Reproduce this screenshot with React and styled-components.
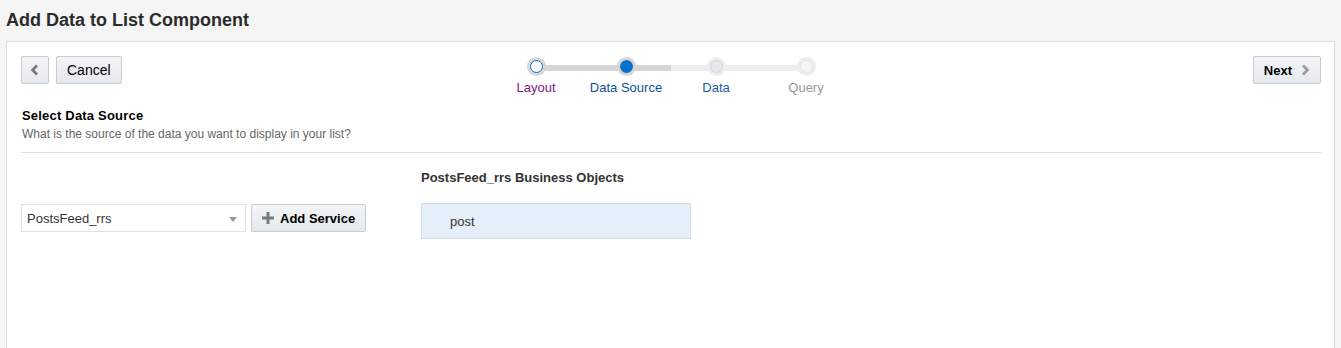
import React from "react";
import styled, { createGlobalStyle } from "styled-components";

const GlobalStyle = createGlobalStyle`
  html, body {
    margin: 0;
    padding: 0;
    background: #f5f5f5;
    font-family: "Liberation Sans", Arial, sans-serif;
    color: #333;
  }
`;

const steps = ["Layout", "Data Source", "Data", "Query"];
const current = 1;

const Page = styled.div`
  height: 348px;
  overflow: hidden;
  display: flex;
  flex-direction: column;
`;

const Title = styled.h1`
  margin: 0;
  padding: 10px 6px 0;
  height: 31px;
  font-size: 18px;
  font-weight: bold;
  color: #2b2b2b;
  line-height: 20px;
`;

const Panel = styled.div`
  flex: 1;
  margin: 0 6px;
  background: #fff;
  border: 1px solid #dcdcdc;
  border-bottom: none;
  padding: 14px 13px 0 14px;
`;

const Toolbar = styled.div`
  display: grid;
  grid-template-columns: 1fr auto 1fr;
  align-items: start;
`;

const Group = styled.div`
  display: flex;
  gap: 7px;
  justify-content: ${(p) => (p.$end ? "flex-end" : "flex-start")};
`;

const Button = styled.button`
  height: 28px;
  min-width: 28px;
  padding: 0 ${(p) => (p.$icon ? "0" : "10px")};
  display: inline-flex;
  align-items: center;
  justify-content: center;
  gap: ${(p) => (p.$gap ? p.$gap : "6px")};
  background: linear-gradient(#f3f5f7, #e5e9ed);
  border: 1px solid #c4ccd4;
  border-radius: 2px;
  font-family: "Liberation Sans", Arial, sans-serif;
  font-size: ${(p) => (p.$big ? "14px" : "13px")};
  font-weight: ${(p) => (p.$bold ? "bold" : "normal")};
  color: #000;
  cursor: pointer;
`;

const Stepper = styled.div`
  display: flex;
  padding-top: 1px;
`;

const Step = styled.div`
  position: relative;
  width: 90px;
  display: flex;
  flex-direction: column;
  align-items: center;

  &::before,
  &::after {
    content: "";
    position: absolute;
    top: 8px;
    height: 6px;
    width: 50%;
  }
  &::before {
    left: 0;
    background: ${(p) => (p.$first ? "transparent" : p.$leftOn ? "#d6d6d6" : "#eeeeee")};
  }
  &::after {
    right: 0;
    background: ${(p) => (p.$last ? "transparent" : p.$rightOn ? "#d6d6d6" : "#eeeeee")};
  }
`;

const Dot = styled.span`
  position: relative;
  z-index: 1;
  box-sizing: border-box;
  width: 19px;
  height: 19px;
  border-radius: 50%;
  background: ${(p) => (p.$state === "future" || p.$state === "last" ? "#eeeeee" : "#d6d6d6")};
  display: flex;
  align-items: center;
  justify-content: center;

  &::after {
    content: "";
    box-sizing: border-box;
    width: 13px;
    height: 13px;
    border-radius: 50%;
    ${(p) =>
      p.$state === "done"
        ? "background:#fff;border:1.5px solid #0572ce;"
        : p.$state === "current"
        ? "background:#0572ce;"
        : p.$state === "future"
        ? "background:#e4e8ec;border:1px solid #cdd4db;"
        : "background:#f4f5f6;border:1px solid #e1e4e7;"}
  }
`;

const StepLabel = styled.span`
  margin-top: 4px;
  font-size: 13px;
  white-space: nowrap;
  color: ${(p) => p.$color};
`;

const Section = styled.div`
  margin-top: 13px;
  padding-left: 1px;
  padding-bottom: 10px;
  border-bottom: 1px solid #d9e1e8;
`;

const SectionTitle = styled.div`
  font-size: 13px;
  font-weight: bold;
  color: #000;
  letter-spacing: 0.2px;
  line-height: 16px;
`;

const SectionText = styled.div`
  margin-top: 3px;
  font-size: 12px;
  color: #666;
  line-height: 15px;
`;

const Columns = styled.div`
  display: grid;
  grid-template-columns: 400px 1fr;
`;

const LeftCol = styled.div`
  padding-top: 51px;
  display: flex;
  gap: 5px;
`;

const Select = styled.div`
  box-sizing: border-box;
  width: 225px;
  height: 28px;
  border: 1px solid #dfe4e9;
  display: flex;
  align-items: center;
  justify-content: space-between;
  padding: 0 8px 0 5px;
  font-size: 13px;
  color: #333;
`;

const Caret = styled.span`
  width: 0;
  height: 0;
  border-left: 4px solid transparent;
  border-right: 4px solid transparent;
  border-top: 5px solid #999;
  margin-top: 2px;
`;

const RightCol = styled.div`
  padding-top: 17px;
`;

const ObjTitle = styled.div`
  font-size: 13px;
  font-weight: bold;
  color: #333;
  line-height: 16px;
`;

const ObjList = styled.div`
  margin-top: 17px;
  width: 270px;
`;

const ObjItem = styled.div`
  box-sizing: border-box;
  height: 36px;
  display: flex;
  align-items: center;
  padding-left: 28px;
  background: #e4eff9;
  border: 1px solid #d6dadf;
  font-size: 13px;
  color: #333;
`;

const Chevron = ({ dir, color }) => (
  <svg width="10" height="12" viewBox="0 0 10 12">
    <polyline
      points={dir === "left" ? "7,1.5 2.5,6 7,10.5" : "3,1.5 7.5,6 3,10.5"}
      fill="none"
      stroke={color}
      strokeWidth="2.6"
    />
  </svg>
);

const Plus = () => (
  <svg width="12" height="12" viewBox="0 0 12 12">
    <rect x="4.5" y="0" width="3" height="12" fill="#7a7a7a" />
    <rect x="0" y="4.5" width="12" height="3" fill="#7a7a7a" />
  </svg>
);

const labelColors = ["#7a1a7d", "#0d5296", "#1a5aa6", "#999999"];

export default function App() {
  return (
    <Page>
      <GlobalStyle />
      <Title>Add Data to List Component</Title>
      <Panel>
        <Toolbar>
          <Group>
            <Button $icon>
              <Chevron dir="left" color="#777" />
            </Button>
            <Button $big>Cancel</Button>
          </Group>
          <Stepper>
            {steps.map((s, i) => {
              const state =
                i < current ? "done" : i === current ? "current" : i === steps.length - 1 ? "last" : "future";
              return (
                <Step
                  key={s}
                  $first={i === 0}
                  $last={i === steps.length - 1}
                  $leftOn={i <= current}
                  $rightOn={i <= current}
                >
                  <Dot $state={state} />
                  <StepLabel $color={labelColors[i]}>{s}</StepLabel>
                </Step>
              );
            })}
          </Stepper>
          <Group $end>
            <Button $bold $gap="8px">
              Next
              <Chevron dir="right" color="#999" />
            </Button>
          </Group>
        </Toolbar>

        <Section>
          <SectionTitle>Select Data Source</SectionTitle>
          <SectionText>What is the source of the data you want to display in your list?</SectionText>
        </Section>

        <Columns>
          <LeftCol>
            <Select>
              PostsFeed_rrs
              <Caret />
            </Select>
            <Button $bold>
              <Plus />
              Add Service
            </Button>
          </LeftCol>
          <RightCol>
            <ObjTitle>PostsFeed_rrs Business Objects</ObjTitle>
            <ObjList>
              <ObjItem>post</ObjItem>
            </ObjList>
          </RightCol>
        </Columns>
      </Panel>
    </Page>
  );
}
